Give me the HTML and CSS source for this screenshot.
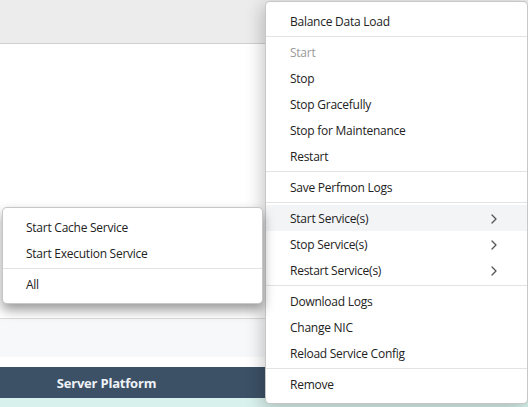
FILE: index.html
```html
<!DOCTYPE html>
<html>
<head>
<meta charset="utf-8">
<link rel="stylesheet" href="styles.css">
</head>
<body>
<div class="page">
  <div class="topbar"></div>
  <div class="content"></div>
  <div class="band"></div>
  <div class="gap"></div>
  <div class="thead">
    <div class="th">Server Platform</div>
  </div>
  <div class="tbody"></div>

  <div class="menu main-menu">
    <div class="section">
      <div class="item">Balance Data Load</div>
    </div>
    <div class="sep"></div>
    <div class="section">
      <div class="item disabled">Start</div>
      <div class="item">Stop</div>
      <div class="item">Stop Gracefully</div>
      <div class="item">Stop for Maintenance</div>
      <div class="item">Restart</div>
    </div>
    <div class="sep"></div>
    <div class="section">
      <div class="item">Save Perfmon Logs</div>
    </div>
    <div class="sep"></div>
    <div class="section">
      <div class="item sub active"><span>Start Service(s)</span><svg class="chev" viewBox="0 0 6 10" width="6" height="10"><polyline points="1,1 5,5 1,9"/></svg></div>
      <div class="item sub"><span>Stop Service(s)</span><svg class="chev" viewBox="0 0 6 10" width="6" height="10"><polyline points="1,1 5,5 1,9"/></svg></div>
      <div class="item sub"><span>Restart Service(s)</span><svg class="chev" viewBox="0 0 6 10" width="6" height="10"><polyline points="1,1 5,5 1,9"/></svg></div>
    </div>
    <div class="sep"></div>
    <div class="section">
      <div class="item">Download Logs</div>
      <div class="item">Change NIC</div>
      <div class="item">Reload Service Config</div>
    </div>
    <div class="sep"></div>
    <div class="section">
      <div class="item">Remove</div>
    </div>
  </div>

  <div class="menu sub-menu">
    <div class="section">
      <div class="item">Start Cache Service</div>
      <div class="item">Start Execution Service</div>
    </div>
    <div class="sep"></div>
    <div class="section">
      <div class="item">All</div>
    </div>
  </div>
</div>
</body>
</html>
```
FILE: styles.css
```css
html, body {
  margin: 0;
  padding: 0;
}
body {
  font-family: "Open Sans", "Noto Sans", sans-serif;
  font-size: 12px;
  color: #222;
}
.page {
  position: relative;
  width: 528px;
  height: 407px;
  overflow: hidden;
  background: #fff;
  display: flex;
  flex-direction: column;
}
.topbar {
  height: 43px;
  flex: none;
  background: #ececec;
  border-bottom: 1px solid #cfcfcf;
}
.content {
  height: 274px;
  flex: none;
  background: #fff;
  border-bottom: 1px solid #dcdcdc;
}
.band {
  height: 38px;
  flex: none;
  background: #f7f8fa;
}
.gap {
  height: 10px;
  flex: none;
  background: #fff;
}
.thead {
  height: 31px;
  flex: none;
  background: #3c5166;
  display: flex;
  align-items: center;
}
.th {
  width: 213px;
  text-align: center;
  color: #eef2f6;
  font-weight: 700;
  font-size: 13px;
  letter-spacing: -0.2px;
}
.tbody {
  flex: 1;
  background: #d8f1ec;
}
.menu {
  position: absolute;
  background: #fff;
  border: 1px solid rgba(0, 0, 0, 0.22);
  border-radius: 5px;
  padding: 6px 0;
  box-sizing: border-box;
  letter-spacing: -0.25px;
}
.main-menu {
  left: 265px;
  top: 1px;
  width: 263px;
  box-shadow: -2px 4px 18px rgba(0, 0, 0, 0.24);
}
.sub-menu {
  left: 2px;
  top: 207px;
  width: 261px;
  box-shadow: 0 6px 12px rgba(0, 0, 0, 0.4);
}
.item {
  height: 26px;
  display: flex;
  align-items: center;
  justify-content: space-between;
  padding: 1px 30px 0 24px;
  box-sizing: border-box;
  white-space: nowrap;
}
.sub-menu .item {
  padding-left: 23px;
}
.item.disabled {
  color: #9a9a9a;
}
.item.active {
  background: #f3f4f6;
}
.sep {
  height: 1px;
  background: #e3e3e3;
  margin: 2px 0;
}
.chev {
  fill: none;
  stroke: #555;
  stroke-width: 1.3;
  stroke-linecap: round;
  stroke-linejoin: round;
}
```
